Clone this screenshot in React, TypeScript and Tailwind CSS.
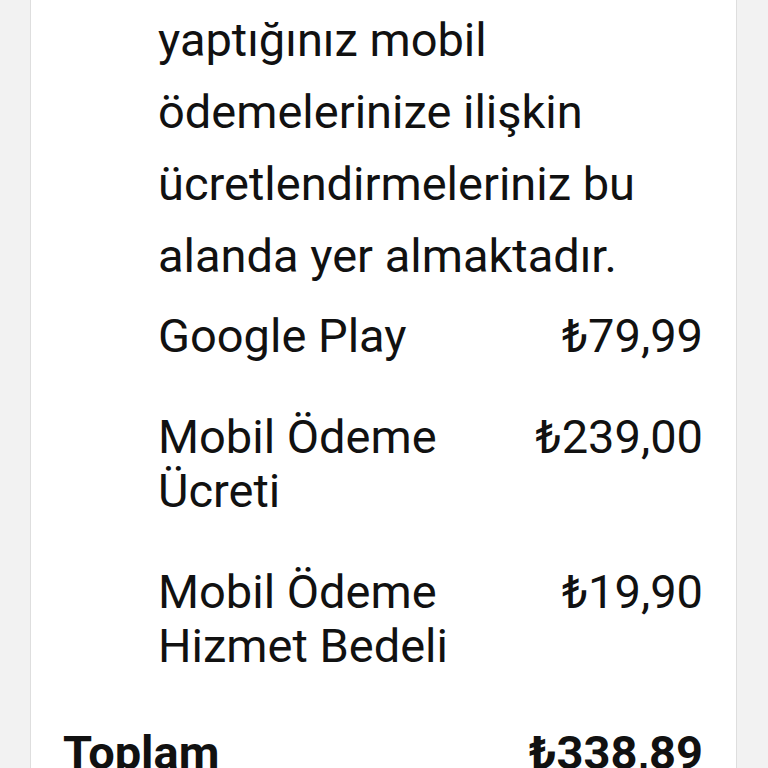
import React from 'react';

interface LineItem {
  label: string;
  amount: string;
}

const items: LineItem[] = [
  { label: 'Google Play', amount: '₺79,99' },
  { label: 'Mobil Ödeme Ücreti', amount: '₺239,00' },
  { label: 'Mobil Ödeme Hizmet Bedeli', amount: '₺19,90' },
];

const App: React.FC = () => {
  return (
    <div
      className="h-[768px] w-full overflow-hidden bg-[#f2f2f2] text-[#111111]"
      style={{ fontFamily: 'Roboto, "Noto Sans", "Liberation Sans", sans-serif' }}
    >
      <div className="ml-[30px] h-full w-[707px] border-x border-[#dedede] bg-white pl-[32px] pr-[33px]">
        <div className="pl-[95px]">
          <p className="pt-[4px] text-[47px] leading-[72px]">
            yaptığınız mobil
            <br />
            ödemelerinize ilişkin
            <br />
            ücretlendirmeleriniz bu
            <br />
            alanda yer almaktadır.
          </p>

          <div className="mt-[17px] flex flex-col gap-[47px]">
            {items.map((item) => (
              <div key={item.label} className="flex items-start justify-between gap-6">
                <span className="flex-1 text-[47px] leading-[54px]">{item.label}</span>
                <span className="shrink-0 text-[47px] leading-[54px]">{item.amount}</span>
              </div>
            ))}
          </div>
        </div>

        <div className="mt-[53px] flex items-start justify-between">
          <span className="text-[47px] font-bold leading-[54px]">Toplam</span>
          <span className="text-[47px] font-bold leading-[54px]">₺338,89</span>
        </div>
      </div>
    </div>
  );
};

export default App;
